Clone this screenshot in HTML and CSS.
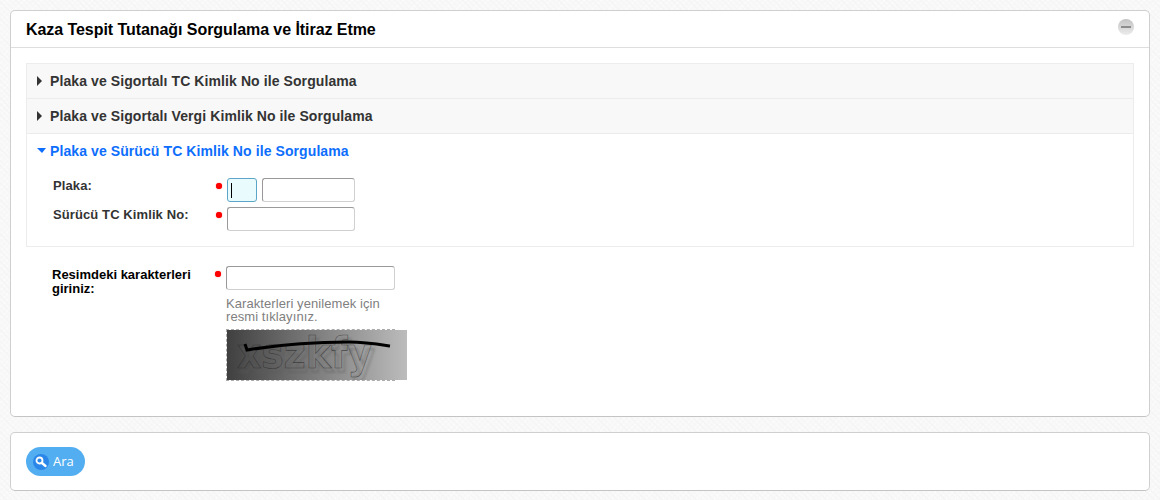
FILE: index.html
```html
<!DOCTYPE html>
<html lang="en">
<head>
  <meta charset="UTF-8">
  <title>Kaza Tespit Tutanağı</title>
  <link rel="stylesheet" href="styles.css">
</head>
<body>

<div class="panel">
  <div class="panelHeader">
    <h1 class="panelTitle">Kaza Tespit Tutanağı Sorgulama ve İtiraz Etme</h1>
    <span class="collapseBtn"><span class="collapseBar"></span></span>
  </div>
  <div class="panelBody">
    <div class="accordion">
      <div class="accHead"><span class="arrowRight"></span>Plaka ve Sigortalı TC Kimlik No ile Sorgulama</div>
      <div class="accHead"><span class="arrowRight"></span>Plaka ve Sigortalı Vergi Kimlik No ile Sorgulama</div>
      <div class="accHead active"><span class="arrowDown"></span>Plaka ve Sürücü TC Kimlik No ile Sorgulama</div>
      <div class="accContent">
        <div class="formRow">
          <label class="formLabel">Plaka:</label>
          <span class="required"></span>
          <div class="inputBox plateCity focused"><span class="caret"></span></div>
          <div class="inputBox plateNo"></div>
        </div>
        <div class="formRow">
          <label class="formLabel">Sürücü TC Kimlik No:</label>
          <span class="required"></span>
          <div class="inputBox tcNo"></div>
        </div>
      </div>
    </div>

    <div class="captchaRow">
      <label class="captchaLabel">Resimdeki karakterleri giriniz:</label>
      <span class="required"></span>
      <div class="captchaField">
        <div class="inputBox captchaInput"></div>
        <p class="captchaHint">Karakterleri yenilemek için resmi tıklayınız.</p>
        <div class="captchaImage">
          <svg width="180" height="50" viewBox="0 0 180 50">
            <defs>
              <linearGradient id="captchaBg" x1="0" y1="0" x2="1" y2="0">
                <stop offset="0" stop-color="#404040"/>
                <stop offset="1" stop-color="#bcbcbc"/>
              </linearGradient>
              <filter id="captchaBlur"><feGaussianBlur stdDeviation="0.8"/></filter>
            </defs>
            <rect width="180" height="50" fill="url(#captchaBg)"/>
            <text class="captchaShadow" x="13" y="42" textLength="135" lengthAdjust="spacingAndGlyphs" filter="url(#captchaBlur)">xszkfy</text>
            <text class="captchaText" x="10" y="38" textLength="135" lengthAdjust="spacingAndGlyphs">xszkfy</text>
            <path d="M18 14 L20 20 C50 15 88 12 122 12 C138 12 150 14 163 16" fill="none" stroke="#000" stroke-width="3"/>
          </svg>
        </div>
      </div>
    </div>
  </div>
</div>

<div class="panel actions">
  <button class="searchBtn">
    <span class="searchIcon">
      <svg width="14" height="14" viewBox="0 0 14 14">
        <circle cx="5.5" cy="5.5" r="3" fill="none" stroke="#fff" stroke-width="1.8"/>
        <path d="M8 8 L11.5 11" stroke="#fff" stroke-width="2.4" stroke-linecap="round"/>
      </svg>
    </span>
    <span class="searchLabel">Ara</span>
  </button>
</div>

</body>
</html>
```

FILE: styles.css
```css
* {
  box-sizing: border-box;
}

body {
  margin: 0;
  padding: 10px 10px 0;
  height: 500px;
  overflow: hidden;
  font-family: "Liberation Sans", Arial, sans-serif;
  background-color: #f8f8f8;
  background-image:
    repeating-linear-gradient(45deg, #f5f5f5 0, #f5f5f5 1px, transparent 1px, transparent 4px),
    repeating-linear-gradient(-45deg, #fbfbfb 0, #fbfbfb 1px, transparent 1px, transparent 4px);
}

.panel {
  background: #fff;
  border: 1px solid #cfcfcf;
  border-bottom-color: #c4c4c4;
  border-radius: 5px;
  height: 407px;
}

.panelHeader {
  height: 37px;
  border-bottom: 1px solid #dedede;
  padding: 2px 15px 0;
  display: flex;
  align-items: center;
  justify-content: space-between;
}

.panelTitle {
  margin: 0;
  font-size: 16px;
  font-weight: 700;
  letter-spacing: -0.06px;
  color: #000;
}

.collapseBtn {
  width: 16px;
  height: 16px;
  margin: -6px 0 0 0;
  border-radius: 50%;
  background: linear-gradient(#c2c2c2, #ececec);
  display: flex;
  align-items: center;
  justify-content: center;
}

.collapseBar {
  width: 10px;
  height: 2px;
  background: #8c8c8c;
}

.panelBody {
  padding: 15px 15px 0;
}

.accordion {
  border: 1px solid #ececec;
}

.accHead {
  height: 35px;
  display: flex;
  align-items: center;
  padding-left: 10px;
  font-size: 14px;
  font-weight: 700;
  letter-spacing: 0.09px;
  color: #333;
  background: #f8f8f8;
  border-bottom: 1px solid #ececec;
}

.accHead.active {
  background: #fff;
  color: #0d6efd;
  border-bottom: 0;
  padding-bottom: 2px;
}

.arrowRight {
  width: 0;
  height: 0;
  margin-right: 8px;
  border-left: 5px solid #333;
  border-top: 5px solid transparent;
  border-bottom: 5px solid transparent;
}

.arrowDown {
  width: 0;
  height: 0;
  margin-right: 4px;
  border-top: 5px solid #0d6efd;
  border-left: 5px solid transparent;
  border-right: 4px solid transparent;
}

.accContent {
  padding: 9px 0 10px 26px;
}

.formRow {
  display: flex;
  align-items: flex-start;
  height: 29px;
}

.formLabel {
  width: 163px;
  font-size: 13px;
  font-weight: 700;
  letter-spacing: 0.1px;
  color: #333;
}

.required {
  width: 6px;
  height: 6px;
  margin: 5px 5px 0 0;
  border-radius: 50%;
  background: #f00;
  box-shadow: 0 0 1px #f00;
}

.inputBox {
  height: 24px;
  background: #fff;
  border: 1px solid #d0d0d0;
  border-top-color: #999;
  border-left-color: #999;
  border-radius: 3px;
}

.plateCity {
  width: 30px;
  margin-right: 5px;
}

.focused {
  background: #e9fbfd;
  border-color: #5ba6c8;
  padding: 4px 0 0 3px;
}

.caret {
  display: block;
  width: 1px;
  height: 15px;
  background: #000;
}

.plateNo {
  width: 93px;
}

.tcNo {
  width: 128px;
}

.captchaRow {
  display: flex;
  align-items: flex-start;
  padding: 19px 0 0 26px;
}

.captchaRow .required {
  margin: 5px 5px 0 0;
}

.captchaLabel {
  width: 163px;
  font-size: 13px;
  font-weight: 700;
  line-height: 14px;
  color: #000;
  padding-top: 2px;
}

.captchaField {
  width: 169px;
}

.captchaInput {
  width: 169px;
}

.captchaHint {
  margin: 7px 0 6px;
  font-size: 13px;
  letter-spacing: 0.08px;
  line-height: 13px;
  color: #808080;
}

.captchaImage {
  width: 169px;
  height: 52px;
  border: 1px dashed #aaa;
}

.captchaImage svg {
  display: block;
}

.captchaText,
.captchaShadow {
  font-family: "DejaVu Sans", sans-serif;
  font-size: 42px;
  font-weight: 700;
  fill: none;
}

.captchaText {
  stroke: rgba(40, 40, 40, 0.7);
  stroke-width: 0.6;
}

.captchaShadow {
  stroke: rgba(90, 90, 90, 0.5);
  stroke-width: 1.4;
}

.actions {
  height: 59px;
  margin-top: 15px;
  padding: 14px 15px;
}

.searchBtn {
  display: flex;
  align-items: center;
  gap: 4px;
  width: 59px;
  height: 29px;
  padding: 0 0 0 7px;
  border: 0;
  border-radius: 15px;
  background: #52aef0;
  color: #fff;
  font-family: "Open Sans", sans-serif;
  font-size: 13px;
}

.searchLabel {
  margin-top: -1px;
}

.searchIcon {
  width: 16px;
  height: 16px;
  border-radius: 50%;
  background: #2a86e8;
  display: flex;
  align-items: center;
  justify-content: center;
}
```
